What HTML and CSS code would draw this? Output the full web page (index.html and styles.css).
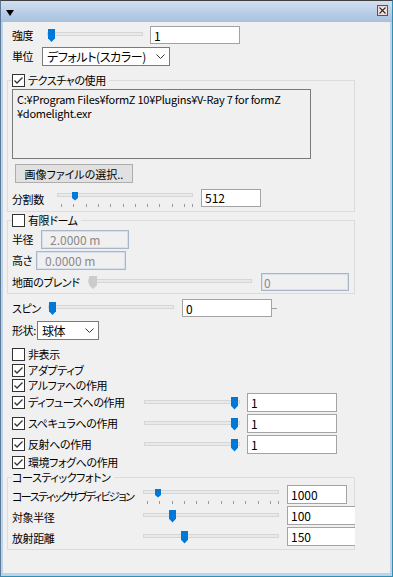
FILE: index.html
```html
<!DOCTYPE html>
<html lang="ja">
<head>
  <meta charset="UTF-8">
  <title>ドームライト</title>
  <link rel="stylesheet" href="styles.css">
</head>
<body>
  <div class="window">
    <div class="titlebar">
      <span class="collapse"></span>
      <svg class="close" width="11" height="11" viewBox="0 0 11 11">
        <rect x="0.5" y="0.5" width="10" height="10" fill="#f4d2d2" stroke="#9a3a3a"/>
        <path d="M2.5 2.5 L8.5 8.5 M8.5 2.5 L2.5 8.5" stroke="#ffffff" stroke-width="3"/>
        <path d="M2.5 2.5 L8.5 8.5 M8.5 2.5 L2.5 8.5" stroke="#2b2b2b" stroke-width="1.3"/>
      </svg>
    </div>

    <div class="panel">
      <div class="row row-strength">
        <span class="lbl lbl-strength">強度</span>
        <div class="slider slider-strength">
          <div class="track"></div>
          <div class="thumb" style="left: 1px"></div>
        </div>
        <input class="field field-wide" value="1">
      </div>

      <div class="row row-unit">
        <span class="lbl lbl-unit">単位</span>
        <div class="combo combo-unit">
          <span>デフォルト(スカラー)</span>
          <svg width="9" height="5" viewBox="0 0 9 5"><path d="M0.5 0.5 L4.5 4.5 L8.5 0.5" fill="none" stroke="#333" stroke-width="1"/></svg>
        </div>
      </div>

      <fieldset class="group group-texture">
        <legend><span class="legend-inner"><span class="cb on"><svg width="11" height="11" viewBox="0 0 11 11"><path d="M1.5 5.5 L4 8 L9.5 2.5" fill="none" stroke="#333" stroke-width="1.3"/></svg></span>テクスチャの使用</span></legend>
        <div class="pathbox">
          <div>C:¥Program Files¥formZ 10¥Plugins¥V-Ray 7 for formZ</div>
          <div>¥domelight.exr</div>
        </div>
        <button class="btn">画像ファイルの選択..</button>
        <div class="row row-subdiv">
          <span class="lbl lbl-subdiv lbl-low">分割数</span>
          <div class="slider slider-ticked slider-subdiv">
            <div class="track"></div>
            <div class="ticks"></div>
            <div class="thumb thumb-small" style="left: 15px"></div>
          </div>
          <input class="field field-short" value="512">
        </div>
      </fieldset>

      <fieldset class="group group-dome">
        <legend><span class="legend-inner"><span class="cb"></span>有限ドーム</span></legend>
        <div class="row row-radius">
          <span class="lbl lbl-radius">半径</span>
          <input class="field field-off field-unit field-radius" value="2.0000 m" disabled>
        </div>
        <div class="row row-height">
          <span class="lbl lbl-height">高さ</span>
          <input class="field field-off field-unit field-wide" value="0.0000 m" disabled>
        </div>
        <div class="row row-blend">
          <span class="lbl lbl-blend">地面のブレンド</span>
          <div class="slider slider-blend">
            <div class="track"></div>
            <div class="thumb thumb-off" style="left: 1px"></div>
          </div>
          <input class="field field-off field-blend" value="0" disabled>
        </div>
      </fieldset>

      <div class="row row-spin">
        <span class="lbl lbl-spin">スピン</span>
        <div class="slider slider-spin">
          <div class="track"></div>
          <div class="thumb" style="left: 1px"></div>
        </div>
        <input class="field field-wide" value="0">
        <span class="spin-dash"></span>
      </div>

      <div class="row row-shape">
        <span class="lbl lbl-shape">形状:</span>
        <div class="combo combo-shape">
          <span>球体</span>
          <svg width="9" height="5" viewBox="0 0 9 5"><path d="M0.5 0.5 L4.5 4.5 L8.5 0.5" fill="none" stroke="#333" stroke-width="1"/></svg>
        </div>
      </div>

      <div class="row row-check row-hide">
        <span class="check"><span class="cb"></span>非表示</span>
      </div>
      <div class="row row-check row-adaptive">
        <span class="check"><span class="cb on"><svg width="11" height="11" viewBox="0 0 11 11"><path d="M1.5 5.5 L4 8 L9.5 2.5" fill="none" stroke="#333" stroke-width="1.3"/></svg></span>アダプティブ</span>
      </div>
      <div class="row row-check">
        <span class="check"><span class="cb on"><svg width="11" height="11" viewBox="0 0 11 11"><path d="M1.5 5.5 L4 8 L9.5 2.5" fill="none" stroke="#333" stroke-width="1.3"/></svg></span>アルファへの作用</span>
      </div>
      <div class="row row-affect">
        <span class="check check-fixed"><span class="cb on"><svg width="11" height="11" viewBox="0 0 11 11"><path d="M1.5 5.5 L4 8 L9.5 2.5" fill="none" stroke="#333" stroke-width="1.3"/></svg></span>ディフューズへの作用</span>
        <div class="slider slider-affect">
          <div class="track"></div>
          <div class="thumb" style="left: 87px"></div>
        </div>
        <input class="field field-wide" value="1">
      </div>
      <div class="row row-affect row-gap">
        <span class="check check-fixed"><span class="cb on"><svg width="11" height="11" viewBox="0 0 11 11"><path d="M1.5 5.5 L4 8 L9.5 2.5" fill="none" stroke="#333" stroke-width="1.3"/></svg></span>スペキュラへの作用</span>
        <div class="slider slider-affect">
          <div class="track"></div>
          <div class="thumb" style="left: 87px"></div>
        </div>
        <input class="field field-wide" value="1">
      </div>
      <div class="row row-affect row-gap">
        <span class="check check-fixed"><span class="cb on"><svg width="11" height="11" viewBox="0 0 11 11"><path d="M1.5 5.5 L4 8 L9.5 2.5" fill="none" stroke="#333" stroke-width="1.3"/></svg></span>反射への作用</span>
        <div class="slider slider-affect">
          <div class="track"></div>
          <div class="thumb" style="left: 87px"></div>
        </div>
        <input class="field field-wide" value="1">
      </div>
      <div class="row row-check row-fog">
        <span class="check"><span class="cb on"><svg width="11" height="11" viewBox="0 0 11 11"><path d="M1.5 5.5 L4 8 L9.5 2.5" fill="none" stroke="#333" stroke-width="1.3"/></svg></span>環境フォグへの作用</span>
      </div>

      <fieldset class="group group-caustics">
        <legend>コースティックフォトン</legend>
        <div class="row row-caustic">
          <span class="lbl lbl-caustic lbl-low lbl-tight">コースティックサブディビジョン</span>
          <div class="slider slider-ticked slider-caustic">
            <div class="track"></div>
            <div class="ticks"></div>
            <div class="thumb thumb-small" style="left: 12px"></div>
          </div>
          <input class="field field-short" value="1000">
        </div>
        <div class="row row-caustic row-gap">
          <span class="lbl lbl-caustic lbl-low">対象半径</span>
          <div class="slider slider-caustic">
            <div class="track"></div>
            <div class="thumb" style="left: 26px"></div>
          </div>
          <input class="field field-cut" value="100">
        </div>
        <div class="row row-caustic row-gap">
          <span class="lbl lbl-caustic lbl-low">放射距離</span>
          <div class="slider slider-caustic">
            <div class="track"></div>
            <div class="thumb" style="left: 38px"></div>
          </div>
          <input class="field field-cut" value="150">
        </div>
      </fieldset>
    </div>
  </div>
</body>
</html>
```

FILE: styles.css
```css
html, body {
  margin: 0;
  padding: 0;
}

body {
  width: 393px;
  height: 577px;
  overflow: hidden;
  font-family: "Noto Sans CJK JP", "Noto Sans", sans-serif;
  font-size: 11px;
  letter-spacing: -0.4px;
  color: #000000;
  font-feature-settings: "palt";
}

.window {
  box-sizing: border-box;
  height: 577px;
  display: flex;
  flex-direction: column;
  background-color: #bcd3ea;
  border-top: 1px solid #3f3f3f;
  border-left: 1px solid #5d7996;
  border-right: 1px solid #2f8fb5;
  border-bottom: 1px solid #2f8fb5;
}

/* barre de titre */
.titlebar {
  flex: none;
  height: 21px;
  display: flex;
  align-items: flex-start;
  justify-content: space-between;
  padding: 0 4px 0 5px;
  background: linear-gradient(#d0dff0, #a7c1de);
}

.collapse {
  margin-top: 9px;
  width: 0;
  height: 0;
  border-left: 4px solid transparent;
  border-right: 4px solid transparent;
  border-top: 6px solid #000000;
}

.close {
  margin-top: 4px;
}

.panel {
  flex: 1;
  margin: 0 2px 3px 2px;
  padding-left: 4px;
  background-color: #f0f0f0;
  overflow: hidden;
}

.row {
  display: flex;
  align-items: center;
  margin-left: 5px;
  height: 18px;
}

.group .row {
  margin-left: 0;
}

.lbl {
  flex: none;
  white-space: nowrap;
  line-height: 13px;
}

.lbl-low {
  padding-top: 4px;
}

.lbl-tight {
  letter-spacing: -1.5px;
}

/* champs */
.field {
  box-sizing: border-box;
  flex: none;
  height: 18px;
  margin: 0;
  padding: 0 3px;
  border: 1px solid #a3a3a3;
  background-color: #ffffff;
  font: inherit;
  font-size: 12px;
  letter-spacing: 0;
  color: #000000;
  outline: none;
}

.field-wide { width: 90px; }
.field-short { width: 60px; }

.field-cut {
  width: 68px;
  border-right: none;
}

.field-off {
  border-color: #a9b6c8;
  box-shadow: inset 0 0 0 1px #d7e1ed;
  background-color: #f0f0f0;
  color: #8a8a8a;
}

.field-unit { padding-left: 8px; }
.field-radius { width: 88px; }
.field-blend { width: 88px; padding-left: 2px; }

.combo {
  box-sizing: border-box;
  flex: none;
  height: 19px;
  display: flex;
  align-items: center;
  justify-content: space-between;
  padding: 0 4px 0 4px;
  border: 1px solid #7a7a7a;
  background-color: #ffffff;
  white-space: nowrap;
  font-size: 12px;
}

.combo-unit { width: 128px; }
.combo-shape { width: 62px; }

/* curseurs */
.slider {
  position: relative;
  flex: none;
  box-sizing: border-box;
  height: 18px;
  padding-top: 6px;
}

.track {
  box-sizing: border-box;
  height: 4px;
  border: 1px solid #d6d6d6;
  background-color: #e7eaea;
}

.thumb {
  position: absolute;
  top: 3px;
  width: 7px;
  height: 13px;
  background-color: #0078d7;
  clip-path: polygon(0 0, 100% 0, 100% 72%, 50% 100%, 0 72%);
}

.thumb-small {
  width: 6px;
  height: 9px;
}

.thumb-off {
  width: 8px;
  background-color: #cccccc;
}

.slider-ticked {
  padding-top: 4px;
}

.ticks {
  height: 3px;
  margin-top: 7px;
  margin-left: 4px;
  border-right: 1px solid #9a9a9a;
  background: repeating-linear-gradient(to right, #9a9a9a 0 1px, transparent 1px 12.3px);
}

.slider-strength { width: 96px; margin-right: 7px; }
.slider-subdiv { width: 136px; margin-right: 8px; }
.slider-blend { width: 164px; margin-right: 9px; }
.slider-spin { width: 126px; margin-right: 8px; }
.slider-affect { width: 96px; margin-right: 7px; }
.slider-caustic { width: 136px; margin-right: 8px; }

.lbl-strength { width: 35px; }
.lbl-unit { width: 30px; }
.lbl-subdiv { width: 45px; }
.lbl-radius { width: 29px; }
.lbl-height { width: 24px; }
.lbl-blend { width: 76px; }
.lbl-spin { width: 36px; }
.lbl-shape { width: 25px; }
.lbl-caustic { width: 131px; }

.row-strength { margin-top: 4px; }
.row-unit { margin-top: 3px; height: 19px; }
.row-spin { margin-top: 5px; }
.row-shape { margin-top: 4px; }

.spin-dash {
  width: 5px;
  height: 1px;
  background-color: #a0a0a0;
}

/* cases a cocher */
.cb {
  box-sizing: border-box;
  flex: none;
  width: 13px;
  height: 13px;
  border: 1px solid #333333;
  background-color: #ffffff;
  display: flex;
  align-items: center;
  justify-content: center;
}

.check {
  display: flex;
  align-items: center;
  gap: 3px;
  white-space: nowrap;
  line-height: 13px;
}

.check-fixed {
  flex: none;
  width: 132px;
}

.row-check { height: 15px; }
.row-hide { margin-top: 8px; }
.row-adaptive { margin-top: 1px; }
.row-fog { margin-top: 1px; }

.row-affect { height: 19px; }
.row-gap { margin-top: 2px; }

/* groupes */
.group {
  box-sizing: border-box;
  width: 348px;
  min-width: 0;
  margin: 0;
  padding: 0 0 4px 4px;
  border: 1px solid #dcdcdc;
}

.group legend {
  padding: 0 3px 0 0;
  line-height: 13px;
}

.legend-inner {
  display: flex;
  align-items: center;
  gap: 3px;
  height: 13px;
}

.group-texture { margin-top: 8px; }
.group-dome { margin-top: 2px; padding-bottom: 2px; }
.group-caustics { padding-bottom: 3px; }
.group-caustics legend { line-height: 14px; }

.pathbox {
  box-sizing: border-box;
  width: 299px;
  height: 70px;
  margin-top: 2px;
  padding: 3px 4px;
  border: 1px solid #7a7a7a;
  background-color: #f0f0f0;
  line-height: 13px;
  white-space: nowrap;
  letter-spacing: -0.25px;
}

.pathbox div + div {
  margin-top: 1px;
}

.btn {
  display: block;
  box-sizing: border-box;
  width: 118px;
  height: 19px;
  margin: 5px 0 0 3px;
  padding: 0;
  border: 1px solid #adadad;
  background-color: #e1e1e1;
  font: inherit;
  color: #000000;
}

.row-subdiv { margin-top: 5px; height: 19px; }
.row-radius { margin-top: 3px; height: 19px; }
.row-radius .field, .row-height .field { height: 19px; }
.row-height { margin-top: 2px; height: 19px; }
.row-blend { margin-top: 3px; }

.row-caustic { height: 19px; }
.row-caustic:first-of-type { margin-top: 1px; }
.row-caustic .field { height: 19px; }
.row-affect .field { height: 19px; }
```
